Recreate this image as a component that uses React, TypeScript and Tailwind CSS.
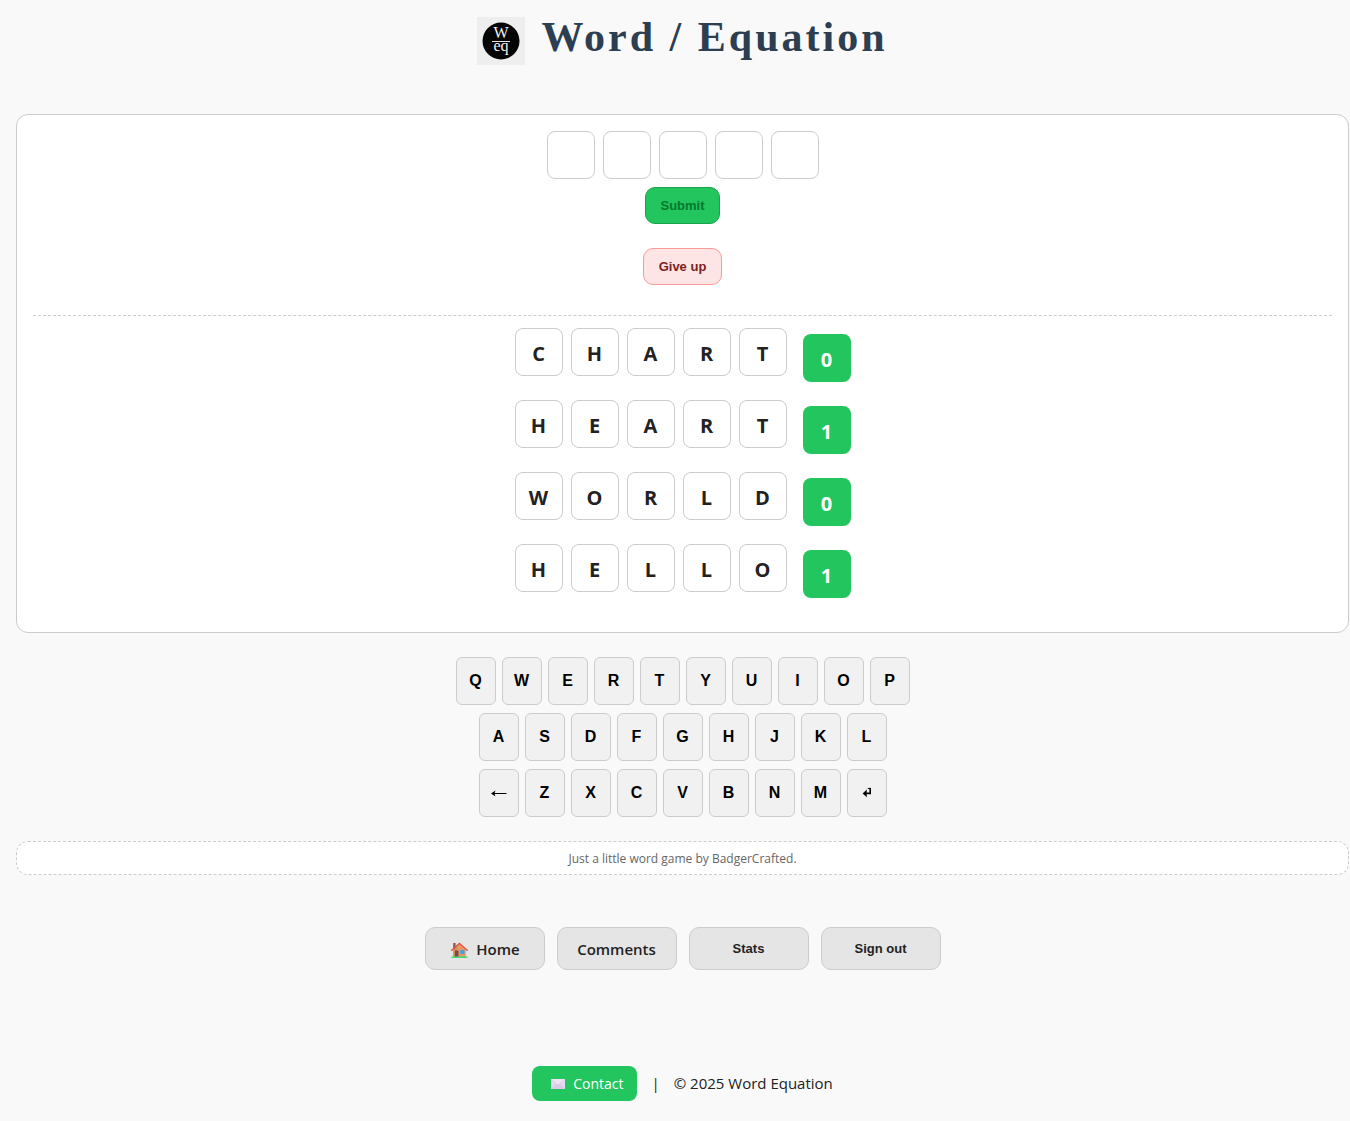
import React from "react";

const guesses = [
  { word: "CHART", score: 0 },
  { word: "HEART", score: 1 },
  { word: "WORLD", score: 0 },
  { word: "HELLO", score: 1 },
];

const keyClass =
  "flex h-12 w-10 items-center justify-center rounded-md border border-[#cccccc] bg-[#f1f1f1] font-['Liberation_Sans',sans-serif] text-base font-bold text-black";

const navClass =
  "flex h-[43px] w-[120px] items-center justify-center rounded-[10px] border border-[#cccccc] bg-[#e5e5e5] text-[#222222]";

function Logo() {
  return (
    <svg className="size-12" viewBox="0 0 48 48" role="img" aria-label="Word Equation logo">
      <rect width="48" height="48" fill="#eeeeee" />
      <circle cx="24" cy="24" r="18.5" fill="#050505" />
      <g fill="#f2f2f2" fontFamily="'Liberation Serif', serif" textAnchor="middle">
        <text x="24" y="21" fontSize="16">W</text>
        <text x="24" y="34" fontSize="16">eq</text>
      </g>
      <rect x="15" y="24" width="18" height="1" fill="#e5e5e5" />
    </svg>
  );
}

function HouseIcon() {
  return (
    <svg className="h-4 w-[17px]" viewBox="0 0 17 16" aria-hidden="true">
      <rect x="2.2" y="1" width="2.4" height="6" fill="#8d5b50" />
      <path d="M2.3 8 8.5 2.2 14.7 8v7H2.3z" fill="#e39a63" />
      <path d="M2.3 8 6 4.6V15H2.3z" fill="#d1885a" />
      <rect x="4" y="8.6" width="3.5" height="6.4" fill="#7b4a48" />
      <rect x="9.4" y="8" width="4" height="4" fill="#35a5f2" />
      <path d="M.8 8.3 8.4 1.4l7.8 6.9" fill="none" stroke="#e4503f" strokeWidth="1.5" strokeLinecap="round" />
      <rect x=".3" y="14.5" width="16.4" height="1.4" rx=".6" fill="#3ddc77" />
    </svg>
  );
}

function EnvelopeIcon() {
  return (
    <svg className="h-2.5 w-3.5" viewBox="0 0 14 10" aria-hidden="true">
      <rect width="14" height="10" fill="#e6d9ee" />
      <path d="M0 10 5 4.6h4L14 10z" fill="#dccbe8" />
      <path d="M0 0h14L7 5.8z" fill="#eee4f3" />
      <path d="M0 .3 7 6l7-5.7" fill="none" stroke="#d6c6e1" strokeWidth=".5" />
    </svg>
  );
}

function BackIcon() {
  return (
    <svg className="h-2.5 w-4" viewBox="0 0 16 10" aria-hidden="true">
      <path d="M2 5.5h13.5" stroke="#000" strokeWidth="1" />
      <path d="M0 5.5 4.5 2.6 3.4 5.5l1.1 2.9z" fill="#000" />
    </svg>
  );
}

function EnterIcon() {
  return (
    <svg className="h-3 w-2.5" viewBox="0 0 10 12" aria-hidden="true">
      <path d="M8.2 1V6.4H3" fill="none" stroke="#000" strokeWidth="1.6" />
      <path d="M5.8 1.4h3.2" stroke="#000" strokeWidth="1" />
      <path d="M.6 6.4 5 2.6 4.4 6.4l.6 3.8z" fill="#000" />
    </svg>
  );
}

function Tile({ letter = "" }: { letter?: string }) {
  return (
    <div className="flex size-12 items-center justify-center rounded-lg border border-[#cccccc] bg-white pt-1 text-xl leading-6 font-bold text-[#222222]">
      {letter}
    </div>
  );
}

function LetterKeys({ letters }: { letters: string }) {
  return (
    <>
      {letters.split("").map((l) => (
        <button key={l} type="button" className={keyClass}>
          {l}
        </button>
      ))}
    </>
  );
}

export default function App() {
  return (
    <div className="min-h-screen bg-[#f9f9f9] pr-px pb-5 pl-4 font-['Open_Sans',sans-serif] text-[#222222]">
      <header className="flex items-start justify-center gap-4 pt-[17px]">
        <Logo />
        <h1 className="font-['Liberation_Serif',serif] text-[42px] leading-10 font-bold tracking-[3px] text-[#2c3e50]">
          Word / Equation
        </h1>
      </header>

      <main className="mt-[49px]">
        <section className="flex flex-col items-center rounded-xl border border-[#cccccc] bg-white p-4">
          <div className="flex gap-2">
            {[0, 1, 2, 3, 4].map((i) => (
              <Tile key={i} />
            ))}
          </div>
          <button
            type="button"
            className="mt-2 h-[37px] rounded-[10px] border border-[#16a34a] bg-[#22c55e] px-3.5 font-['Liberation_Sans',sans-serif] text-[13px] font-bold text-[#047a2c]"
          >
            Submit
          </button>
          <button
            type="button"
            className="mt-6 h-[37px] rounded-[10px] border border-[#fc9a9a] bg-[#fee5e5] px-[15px] font-['Liberation_Sans',sans-serif] text-[13px] font-bold text-[#7f1d1d]"
          >
            Give up
          </button>

          <div className="mt-[30px] flex w-full flex-col items-center border-t border-dashed border-[#cccccc] pt-3">
            {guesses.map((g) => (
              <div key={g.word} className="mb-[18px] flex gap-4">
                <div className="flex gap-2">
                  {g.word.split("").map((l, i) => (
                    <Tile key={i} letter={l} />
                  ))}
                </div>
                <div className="mt-1.5 flex size-12 items-center justify-center rounded-lg bg-[#22c55e] pt-1 text-xl leading-6 font-bold text-white">
                  {g.score}
                </div>
              </div>
            ))}
          </div>
        </section>

        <section aria-label="Keyboard" className="mt-6 flex flex-col gap-2">
          <div className="flex justify-center gap-1.5">
            <LetterKeys letters="QWERTYUIOP" />
          </div>
          <div className="flex justify-center gap-1.5">
            <LetterKeys letters="ASDFGHJKL" />
          </div>
          <div className="flex justify-center gap-1.5">
            <button type="button" aria-label="Backspace" className={keyClass}>
              <BackIcon />
            </button>
            <LetterKeys letters="ZXCVBNM" />
            <button type="button" aria-label="Enter" className={keyClass}>
              <EnterIcon />
            </button>
          </div>
        </section>

        <p className="mt-6 rounded-xl border border-dashed border-[#cccccc] bg-white pt-[9px] pb-[7px] text-center text-xs leading-4 text-[#666666]">
          Just a little word game by BadgerCrafted.
        </p>
      </main>

      <nav className="mt-[52px] flex justify-center gap-3">
        <a href="#home" className={`${navClass} gap-2 pt-0.5 pl-0.5 text-[15px] font-semibold`}>
          <HouseIcon />
          Home
        </a>
        <a href="#comments" className={`${navClass} pt-0.5 text-[15px] font-semibold`}>
          Comments
        </a>
        <button type="button" className={`${navClass} font-['Liberation_Sans',sans-serif] text-[13px] font-bold`}>
          Stats
        </button>
        <button type="button" className={`${navClass} font-['Liberation_Sans',sans-serif] text-[13px] font-bold`}>
          Sign out
        </button>
      </nav>

      <footer className="mt-24 flex items-center justify-center gap-3.5 text-[15px]">
        <a
          href="#contact"
          className="flex h-[35px] items-center gap-2 rounded-lg bg-[#22c55e] pr-3.5 pl-[19px] text-sm text-white"
        >
          <EnvelopeIcon />
          Contact
        </a>
        <span>|</span>
        <span>© 2025 Word Equation</span>
      </footer>
    </div>
  );
}
